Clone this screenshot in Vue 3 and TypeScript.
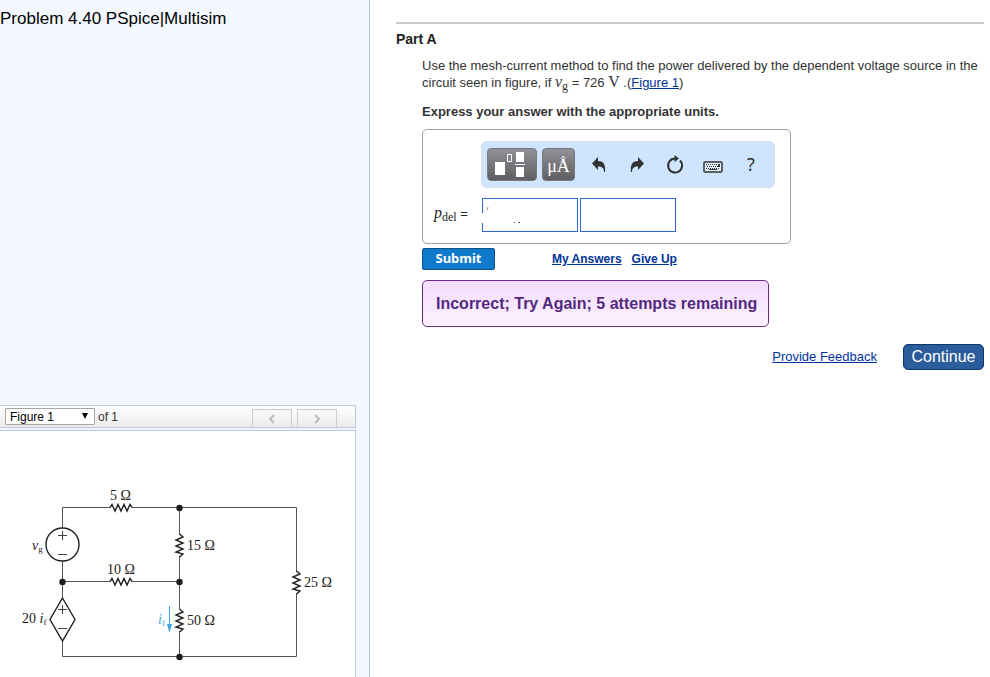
<script setup lang="ts">
import { ref } from 'vue'

interface Point {
  x: number
  y: number
}

const figure = ref('Figure 1')
const amount = ref('')
const units = ref('')

const junctions: Point[] = [
  { x: 179, y: 77 },
  { x: 62, y: 151 },
  { x: 179, y: 151 },
  { x: 179, y: 226 },
]
</script>

<template>
  <div class="page">
    <aside class="sidebar">
      <h1 class="problem">Problem 4.40 PSpice|Multisim</h1>
      <section class="figure-area">
        <div class="figure-bar">
          <label class="picker">
            <select v-model="figure" aria-label="Figure">
              <option>Figure 1</option>
            </select>
            <svg class="caret" viewBox="0 0 8 6" aria-hidden="true"><path d="M1 0H7L4 6Z" /></svg>
          </label>
          <span>of 1</span>
          <div class="pager">
            <button type="button" aria-label="Previous figure">
              <svg viewBox="0 0 8 10"><path d="M6 1L2 5L6 9" /></svg>
            </button>
            <button type="button" aria-label="Next figure">
              <svg viewBox="0 0 8 10"><path d="M2 1L6 5L2 9" /></svg>
            </button>
          </div>
        </div>
        <div class="figure-view">
          <svg class="circuit" viewBox="0 0 355 246" role="img" aria-label="Circuit diagram">
            <g class="wire">
              <path d="M62.5 97V76.5H110M132 76.5H296.5V141M296.5 162V225.5H62.5V209" />
              <path d="M62.5 130V168M62.5 150.5H110M132 150.5H179.5" />
              <path d="M179.5 76V104M179.5 125V178M179.5 200V226" />
            </g>
            <g class="part">
              <circle cx="62.5" cy="113.5" r="16.5" />
              <path d="M62.5 167L75 188.5L62.5 210L50 188.5Z" />
              <path d="M110 76.5L112 73.5L115 80L118 73.5L121 80L124 73.5L127 80L130 73.5L132 76.5" />
              <path d="M110 150.5L112 147.5L115 154L118 147.5L121 154L124 147.5L127 154L130 147.5L132 150.5" />
              <path d="M179.5 103L183 106L176 109L183 112L176 115L183 118L176 121L183 123L179.5 126" />
              <path d="M179.5 178L183 181L176 184L183 187L176 190L183 193L176 196L183 198L179.5 201" />
              <path d="M296.5 140L300 143L293 146L300 149L293 152L300 155L293 158L300 160L296.5 163" />
            </g>
            <g class="sign">
              <path d="M58 104.5H67M62.5 100V109M58 123.5H67" />
              <path d="M58 178.5H67M62.5 174V183M58 197.5H67" />
            </g>
            <circle v-for="(p, i) in junctions" :key="i" class="node" :cx="p.x + 0.5" :cy="p.y" r="3.2" />
            <g class="current">
              <path class="shaft" d="M169.5 175V194" />
              <path d="M167 193H172L169.5 202Z" />
              <text x="158" y="193"><tspan class="var">i</tspan><tspan class="sub" dy="2">f</tspan></text>
            </g>
            <g class="label">
              <text x="110" y="69">5 Ω</text>
              <text x="107" y="143">10 Ω</text>
              <text x="187" y="119">15 Ω</text>
              <text x="187" y="194">50 Ω</text>
              <text x="304" y="156">25 Ω</text>
              <text x="32" y="119"><tspan class="var">v</tspan><tspan class="sub" dy="2">g</tspan></text>
              <text x="22" y="192">20 <tspan class="var">i</tspan><tspan class="sub" dy="2">f</tspan></text>
            </g>
          </svg>
        </div>
      </section>
    </aside>

    <main class="content">
      <h2>Part A</h2>
      <div class="part-body">
        <p>
          Use the mesh-current method to find the power delivered by the dependent voltage source in the
          circuit seen in figure, if <span class="math"><i>v</i><sub>g</sub></span> = 726
          <span class="math">V</span> .(<a href="#figure">Figure 1</a>)
        </p>
        <p class="instruction">Express your answer with the appropriate units.</p>

        <form @submit.prevent>
          <div class="answer">
            <div class="toolbar">
              <button type="button" class="key wide" aria-label="Templates">
                <svg viewBox="0 0 49 33">
                  <g fill="#fff">
                    <path d="M7 13H17V26H7Z" />
                    <path d="M28 3H36V13H28ZM28 18H36V28H28ZM27 15H37V16H27Z" />
                  </g>
                  <path d="M19.5 5.5H23.5V12.5H19.5Z" fill="none" stroke="#fff" />
                </svg>
              </button>
              <button type="button" class="key units">μÅ</button>
              <div class="tools">
                <button type="button" aria-label="Undo">
                  <svg viewBox="0 0 16 16"><path d="M7 0V4C12 4 15 7 14 15H13C13 11 11 9.5 7 9.5V13L1 6.5Z" /></svg>
                </button>
                <button type="button" aria-label="Redo">
                  <svg viewBox="0 0 16 16"><path d="M9 0V4C4 4 1 7 2 15H3C3 11 5 9.5 9 9.5V13L15 6.5Z" /></svg>
                </button>
                <button type="button" aria-label="Reset">
                  <svg class="reset" viewBox="0 0 18 20">
                    <path class="arc" d="M14 5.5A7 7 0 1 1 9 3.5" />
                    <path d="M8.5 0L13 3.5L8.500 7Z" />
                  </svg>
                </button>
                <button type="button" aria-label="Keyboard">
                  <svg class="keyboard" viewBox="0 0 20 12">
                    <rect x="1" y="1" width="18" height="10" rx="1" class="case" />
                    <path class="dots" d="M3 3.5H17M4 5.5H17M3 7.5H17" />
                    <path d="M6 8H14V9H6ZM15 3H17V6H15Z" />
                  </svg>
                </button>
                <button type="button" class="help" aria-label="Help">?</button>
              </div>
            </div>
            <div class="entry">
              <label for="amount"><span class="math"><i>p</i><sub>del</sub></span> =</label>
              <span class="field">
                <input id="amount" v-model="amount" type="text" />
                <svg class="marks" viewBox="0 0 40 28" aria-hidden="true">
                  <path d="M0 15H2V25H0Z" fill="#fff" />
                  <path d="M5 12L6 9" stroke="#b28a68" />
                  <path d="M32 24H33V25H32ZM36 24H38V25H36Z" fill="#555" />
                </svg>
              </span>
              <input v-model="units" type="text" aria-label="Units" />
            </div>
          </div>
          <div class="actions">
            <button type="submit" class="submit">Submit</button>
            <a href="#answers">My Answers</a>
            <a href="#give-up">Give Up</a>
          </div>
        </form>
        <div class="feedback" role="status">Incorrect; Try Again; 5 attempts remaining</div>
      </div>
      <footer>
        <a href="#feedback">Provide Feedback</a>
        <button type="button" class="continue">Continue</button>
      </footer>
    </main>
  </div>
</template>

<style>
body {
  margin: 0;
  background: #fff;
}
</style>

<style scoped>
* {
  box-sizing: border-box;
}
.page {
  display: grid;
  grid-template-columns: 370px minmax(0, 1fr);
  min-height: 100vh;
  font: 13px/16px "Liberation Sans", Arial, sans-serif;
  color: #333;
}
h1,
h2,
p {
  margin: 0;
}
button,
input,
select {
  font-family: inherit;
  margin: 0;
}
a {
  color: #039;
}
.sidebar {
  display: flex;
  flex-direction: column;
  justify-content: space-between;
  background: #f3f8ff;
  border-right: 1px solid #b9c8da;
}
.problem {
  padding-top: 9px;
  font-size: 17px;
  line-height: 20px;
  font-weight: 400;
  color: #000;
}
.figure-area {
  margin-right: 13px;
}
.figure-bar {
  display: flex;
  align-items: center;
  gap: 3px;
  height: 23px;
  margin-bottom: 2px;
  padding: 0 18px 0 5px;
  border: solid #b9c8da;
  border-width: 1px 1px 1px 0;
  background: linear-gradient(#fff, #ebebeb);
  font-size: 12px;
}
.picker {
  position: relative;
  display: flex;
}
select {
  appearance: none;
  width: 90px;
  height: 17px;
  padding: 0 4px;
  border: 1px solid #a6a6a6;
  border-radius: 1px;
  background: #fff;
  font-size: 12px;
  line-height: 14px;
  color: #000;
}
.caret {
  position: absolute;
  right: 6px;
  top: 5px;
  width: 8px;
  height: 6px;
  pointer-events: none;
}
.pager {
  display: flex;
  align-self: flex-end;
  gap: 5px;
  margin-left: auto;
}
.pager button {
  display: grid;
  place-items: center;
  width: 40px;
  height: 18px;
  padding: 0;
  border: 1px solid #ccc;
  border-bottom: 0;
  background: linear-gradient(#fafafa, #ececec);
}
.pager svg {
  width: 8px;
  height: 10px;
  fill: none;
  stroke: #bbb;
  stroke-width: 2;
}
.figure-view {
  border: solid #b9c8da;
  border-width: 1px 1px 0 0;
  background: #fff;
}
.circuit {
  display: block;
  width: 100%;
  font-family: "Liberation Serif", "Times New Roman", serif;
  font-size: 14px;
}
.wire {
  fill: none;
  stroke: #555;
}
.part {
  fill: none;
  stroke: #222;
  stroke-width: 1.4;
}
.part circle {
  fill: #fff;
}
.sign {
  stroke: #444;
}
.node,
.label {
  fill: #1c1c1c;
}
.current {
  fill: #3fa4ea;
}
.shaft {
  stroke: #3fa4ea;
}
.var {
  font-style: italic;
}
.sub {
  font-size: 9px;
}
.content {
  margin: 22px 6px 0 26px;
  padding-top: 6px;
  border-top: 2px solid #ccc;
}
h2 {
  font-size: 14px;
  line-height: 18px;
  color: #222;
}
.part-body {
  padding: 10px 0 0 26px;
}
.math {
  font-family: "Liberation Serif", "Times New Roman", serif;
  font-size: 16px;
  line-height: 1;
}
sub {
  position: relative;
  top: 3px;
  font-size: 12px;
  line-height: 1;
  vertical-align: baseline;
}
.instruction {
  margin: 13px 0 9px;
  font-weight: 700;
}
.answer {
  width: 369px;
  padding: 11px 15px;
  border: 1px solid #a0a0a0;
  border-radius: 5px;
}
.toolbar {
  display: flex;
  align-items: center;
  gap: 5px;
  height: 47px;
  margin-left: 43px;
  padding-left: 5px;
  border: 1px solid #d8dce4;
  border-radius: 6px;
  background: #cee4ff;
}
.key {
  display: grid;
  flex: none;
  place-items: center;
  width: 33px;
  height: 33px;
  padding: 0;
  border: 1px solid #77777c;
  border-radius: 4px;
  background: linear-gradient(#919197, #5f5f61);
  color: #fff;
  font-family: "Liberation Serif", serif;
  font-size: 18px;
}
.units {
  padding-top: 3px;
}
.wide {
  width: 50px;
}
.wide svg {
  width: 49px;
  height: 33px;
}
.tools {
  display: flex;
}
.tools button {
  display: grid;
  place-items: center;
  width: 38px;
  height: 33px;
  padding: 0;
  border: 0;
  background: none;
  color: #333;
}
.tools svg {
  width: 16px;
  height: 16px;
  fill: #333;
}
.tools .reset {
  width: 18px;
  height: 20px;
}
.arc {
  fill: none;
  stroke: #333;
  stroke-width: 2;
}
.tools .keyboard {
  width: 20px;
  height: 12px;
  margin-top: 4px;
}
.case {
  fill: #e8f2ff;
  stroke: #333;
  stroke-width: 1.5;
}
.dots {
  stroke: #333;
  stroke-dasharray: 1 1;
}
.tools .help {
  padding-bottom: 2px;
  font-family: "Noto Sans", sans-serif;
  font-size: 18px;
}
.entry {
  display: flex;
  gap: 2px;
  margin: 10px 0 0 -4px;
}
.entry label {
  width: 46px;
  padding-top: 7px;
  color: #222;
}
.field {
  position: relative;
  display: flex;
}
.entry input {
  width: 96px;
  height: 34px;
  padding: 0 6px;
  border: 1px solid #36c;
  border-radius: 0;
  background: #fff;
  font-size: 13px;
}
.marks {
  position: absolute;
  left: 0;
  top: 0;
  width: 40px;
  height: 28px;
  pointer-events: none;
}
.actions {
  display: flex;
  align-items: center;
  gap: 10px;
  margin: 4px 0 10px;
  font-size: 12px;
  font-weight: 700;
}
.submit {
  width: 73px;
  height: 22px;
  margin-right: 47px;
  padding: 0 0 2px;
  border: 1px solid #0c5287;
  border-radius: 2px;
  background: #0f79cb;
  color: #fff;
  font-family: "Noto Sans", sans-serif;
  font-size: 13px;
  font-weight: 700;
  line-height: 18px;
}
.feedback {
  width: fit-content;
  padding: 12px 11px 12px 13px;
  border: 1px solid #6b2c8c;
  border-radius: 5px;
  background: linear-gradient(#f1dcfc, #fef1ff);
  color: #532a7d;
  font-size: 16px;
  font-weight: 700;
  line-height: 21px;
}
footer {
  display: flex;
  align-items: center;
  justify-content: flex-end;
  gap: 26px;
  margin-top: 17px;
}
.continue {
  width: 81px;
  height: 26px;
  padding: 0 0 1px;
  border: 1px solid #0d3869;
  border-radius: 5px;
  background: #2b5c9c;
  color: #fff;
  font-size: 16px;
}
</style>
